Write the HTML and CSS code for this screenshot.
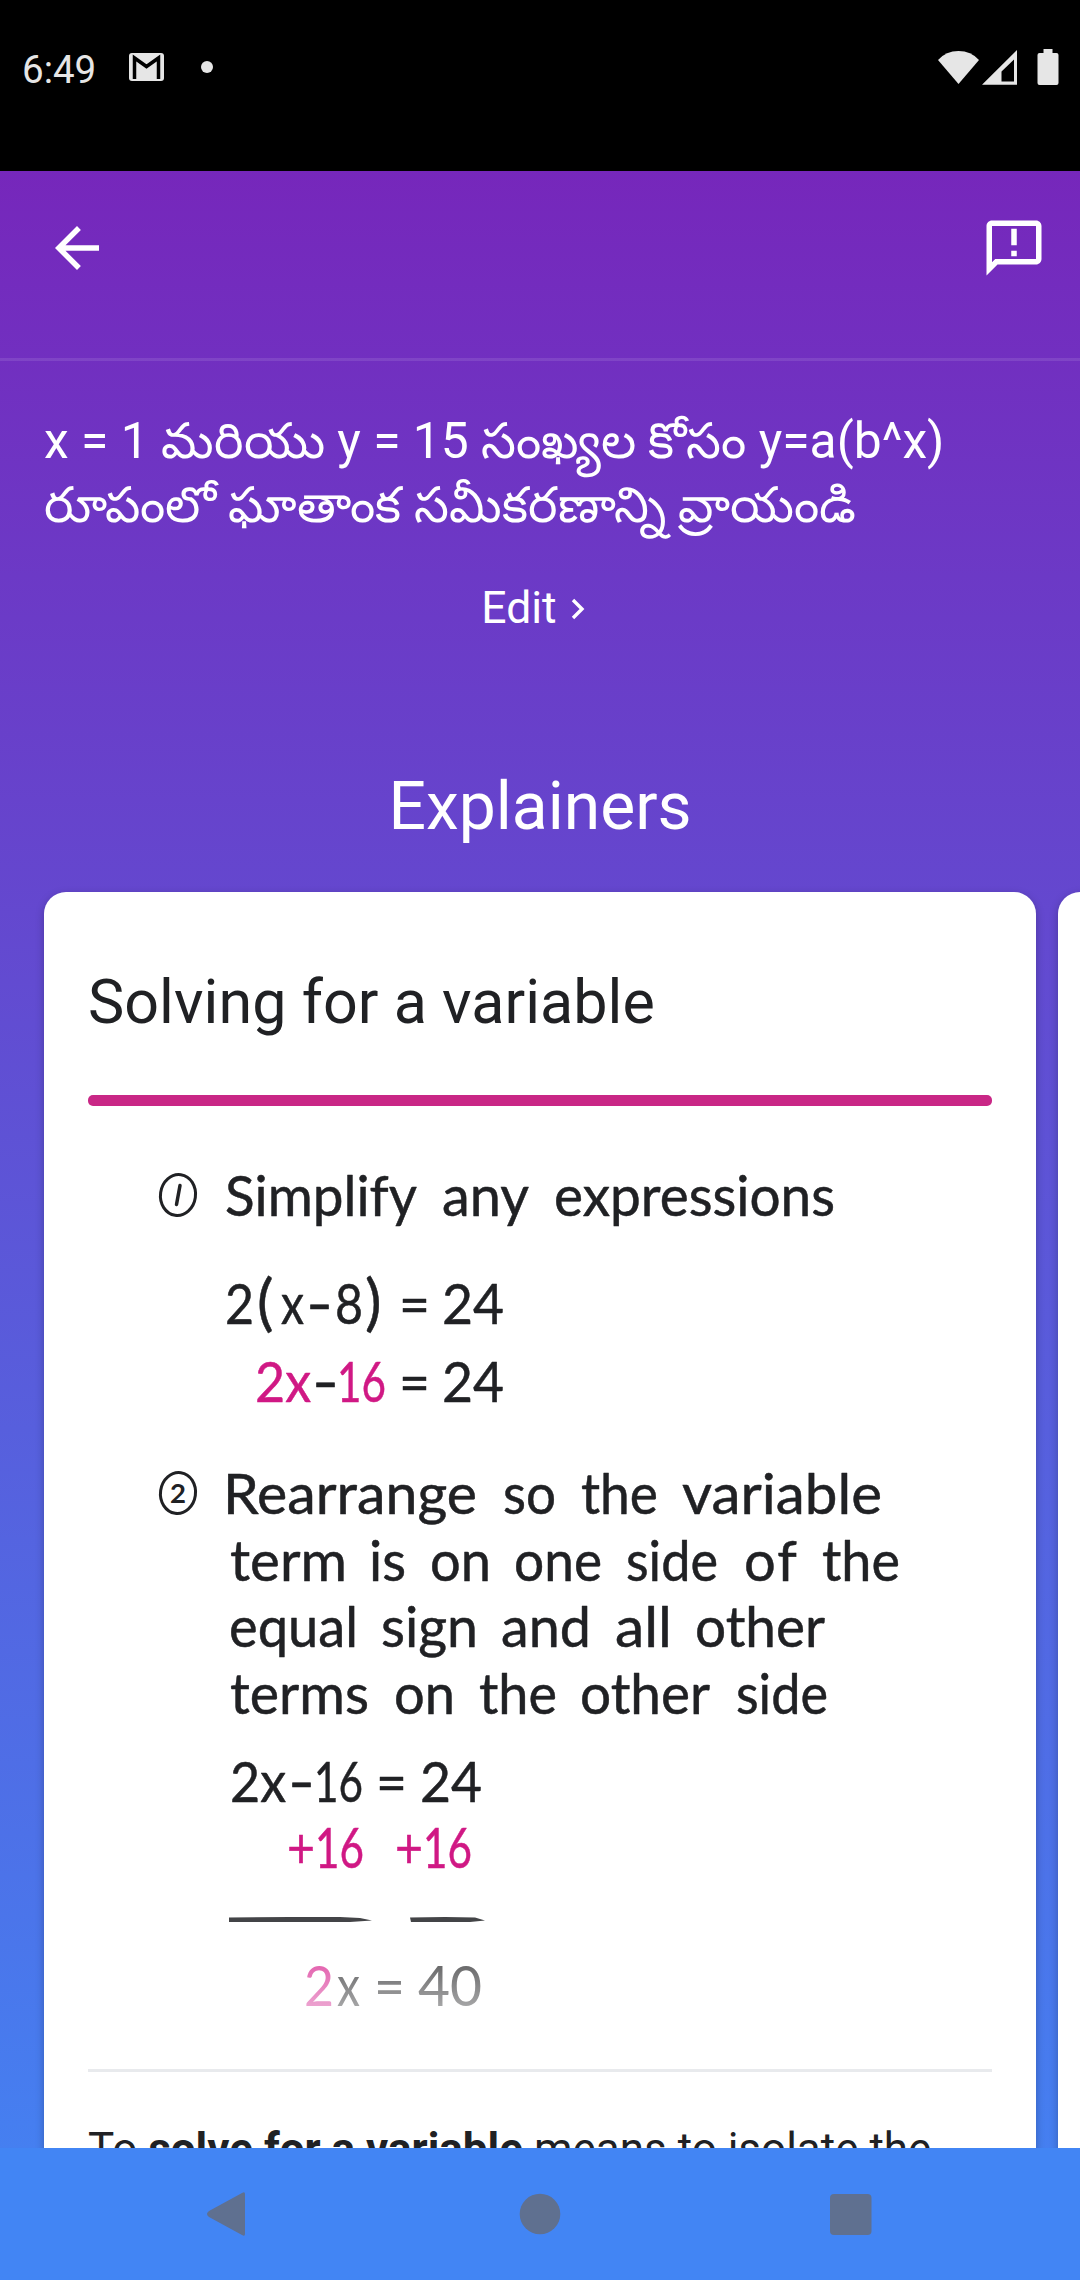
FILE: index.html
```html
<!DOCTYPE html>
<html lang="te">
<head>
<meta charset="utf-8">
<title>Explainers</title>
<link rel="stylesheet" href="styles.css">
</head>
<body>
<div class="screen">
  <header class="status">
    <span class="clock">6:49</span>
    <svg class="mail" viewBox="0 0 35 28"><rect width="35" height="28" rx="3" fill="#e6e6e6"/><path d="M5.500 26V5L17.500 13.500L29.500 5V26" fill="none" stroke="#000" stroke-width="3.500"/></svg>
    <span class="dot"></span>
    <svg class="signals" viewBox="0 0 122 38" fill="#e6e6e6">
      <path d="M0 12Q8 3 20.500 3T41 12L20.500 36Z"/>
      <path fill-rule="evenodd" d="M44 36.700L79 2V36.700ZM63.500 33.500H76V11.500L63.500 23.500Z"/>
      <path d="M105.500 1H114.500V5H118.500Q120.500 5 120.500 7V35Q120.500 37 118.500 37H101.500Q99.500 37 99.500 35V7Q99.500 5 101.500 5H105.500Z"/>
    </svg>
  </header>
  <main class="page">
    <nav class="toolbar">
      <svg class="icon" viewBox="0 0 24 24" fill="#fff"><path d="M20 11H7.830l5.590-5.590L12 4l-8 8 8 8 1.410-1.410L7.830 13H20v-2z"/></svg>
      <svg class="icon" viewBox="0 0 24 24" fill="#fff"><path d="M20 2H4c-1.100 0-2 .9-2 2v18l4-4h14c1.100 0 2-.9 2-2V4c0-1.100-.9-2-2-2zm0 14H5.170L4 17.170V4h16v12zM11 5h2v6h-2zm0 8h2v2h-2z"/></svg>
    </nav>
    <section class="query">
      <p class="question">x = 1 మరియు y = 15 సంఖ్యల కోసం y=a(b^x)<br>రూపంలో ఘాతాంక సమీకరణాన్ని వ్రాయండి</p>
      <a class="edit">Edit <svg class="chevron" viewBox="0 0 14 22"><path d="M2 2L11 11L2 20" fill="none" stroke="#fff" stroke-width="3.400"/></svg></a>
    </section>
    <h1 class="heading">Explainers</h1>
    <div class="cards">
      <article class="card">
        <h2 class="title">Solving for a variable</h2>
        <div class="accent"></div>
        <svg class="notes" viewBox="88 1106 904 963">
          <defs>
            <linearGradient id="fadeInk" gradientUnits="userSpaceOnUse" x1="0" y1="1966" x2="0" y2="2007"><stop offset="0" stop-color="#6b6b6c"/><stop offset="1" stop-color="#a6a6a7"/></linearGradient>
            <linearGradient id="fadePink" gradientUnits="userSpaceOnUse" x1="0" y1="1966" x2="0" y2="2007"><stop offset="0" stop-color="#e467b1"/><stop offset="1" stop-color="#eca3d0"/></linearGradient>
          </defs>
          <g class="ring"><ellipse cx="178" cy="1195" rx="17.500" ry="20.500" transform="rotate(8 178 1195)"/><ellipse cx="178" cy="1493" rx="17.500" ry="20.500" transform="rotate(8 178 1493)"/></g>
          <path class="tick" d="M180 1185.500L176.500 1204.500"/>
          <text class="mini" x="170" y="1503" textLength="16" lengthAdjust="spacingAndGlyphs">2</text>
          <g class="hand">
            <text x="225" y="1216" textLength="192" lengthAdjust="spacingAndGlyphs">Simplify</text><text x="442" y="1216" textLength="87" lengthAdjust="spacingAndGlyphs">any</text><text x="554" y="1216" textLength="281" lengthAdjust="spacingAndGlyphs">expressions</text>
            <text x="223" y="1514" textLength="254" lengthAdjust="spacingAndGlyphs">Rearrange</text><text x="503" y="1514" textLength="53" lengthAdjust="spacingAndGlyphs">so</text><text x="581" y="1514" textLength="77" lengthAdjust="spacingAndGlyphs">the</text><text x="682" y="1514" textLength="200" lengthAdjust="spacingAndGlyphs">variable</text>
            <text x="230" y="1581" textLength="117" lengthAdjust="spacingAndGlyphs">term</text><text x="369" y="1581" textLength="37" lengthAdjust="spacingAndGlyphs">is</text><text x="430" y="1581" textLength="61" lengthAdjust="spacingAndGlyphs">on</text><text x="514" y="1581" textLength="88" lengthAdjust="spacingAndGlyphs">one</text><text x="626" y="1581" textLength="92" lengthAdjust="spacingAndGlyphs">side</text><text x="744" y="1581" textLength="53" lengthAdjust="spacing">of</text><text x="822" y="1581" textLength="78" lengthAdjust="spacingAndGlyphs">the</text>
            <text x="229" y="1647" textLength="129" lengthAdjust="spacingAndGlyphs">equal</text><text x="381" y="1647" textLength="97" lengthAdjust="spacingAndGlyphs">sign</text><text x="501" y="1647" textLength="90" lengthAdjust="spacingAndGlyphs">and</text><text x="615" y="1647" textLength="57" lengthAdjust="spacingAndGlyphs">all</text><text x="695" y="1647" textLength="130" lengthAdjust="spacingAndGlyphs">other</text>
            <text x="230" y="1714" textLength="139" lengthAdjust="spacingAndGlyphs">terms</text><text x="394" y="1714" textLength="61" lengthAdjust="spacingAndGlyphs">on</text><text x="479" y="1714" textLength="78" lengthAdjust="spacingAndGlyphs">the</text><text x="580" y="1714" textLength="130" lengthAdjust="spacingAndGlyphs">other</text><text x="736" y="1714" textLength="92" lengthAdjust="spacingAndGlyphs">side</text>
            <g transform="translate(0 1324)"><text x="225" textLength="29" lengthAdjust="spacingAndGlyphs">2</text><text class="paren" x="257">(</text><text x="281" textLength="23" lengthAdjust="spacingAndGlyphs">x</text><text x="306" textLength="27" lengthAdjust="spacingAndGlyphs">-</text><text x="335" textLength="28" lengthAdjust="spacingAndGlyphs">8</text><text class="paren" x="365">)</text><text x="399" textLength="31" lengthAdjust="spacingAndGlyphs">=</text><text x="442" textLength="62" lengthAdjust="spacingAndGlyphs">24</text></g>
            <g transform="translate(0 1402)"><text class="pink" x="255" textLength="56" lengthAdjust="spacingAndGlyphs">2x</text><text x="312" textLength="27" lengthAdjust="spacingAndGlyphs">-</text><text class="pink" x="337" textLength="49" lengthAdjust="spacingAndGlyphs">16</text><text x="399" textLength="31" lengthAdjust="spacingAndGlyphs">=</text><text x="442" textLength="62" lengthAdjust="spacingAndGlyphs">24</text></g>
            <g transform="translate(0 1802)"><text x="230" textLength="56" lengthAdjust="spacingAndGlyphs">2x</text><text x="288" textLength="27" lengthAdjust="spacingAndGlyphs">-</text><text x="314" textLength="49" lengthAdjust="spacingAndGlyphs">16</text><text x="376" textLength="31" lengthAdjust="spacingAndGlyphs">=</text><text x="420" textLength="62" lengthAdjust="spacingAndGlyphs">24</text></g>
            <g class="pink" transform="translate(0 1868)"><text x="287" textLength="28" lengthAdjust="spacingAndGlyphs">+</text><text x="315" textLength="49" lengthAdjust="spacingAndGlyphs">16</text><text x="395" textLength="28" lengthAdjust="spacingAndGlyphs">+</text><text x="423" textLength="49" lengthAdjust="spacingAndGlyphs">16</text></g>
            <text class="fadepink" x="304" y="2006" textLength="30" lengthAdjust="spacingAndGlyphs">2</text>
            <g class="fade"><text x="337" y="2006" textLength="23" lengthAdjust="spacingAndGlyphs">x</text><text x="374" y="2006" textLength="31" lengthAdjust="spacingAndGlyphs">=</text><text x="418" y="2006" textLength="64" lengthAdjust="spacingAndGlyphs">40</text></g>
          </g>
          <g fill="#434447"><path d="M229 1917.500L290 1917L340 1917L360 1918L372 1920.500L350 1922L280 1922L229 1922Z"/><path d="M410 1917.500L445 1917L475 1917.500L485 1920.500L470 1922L411 1922Z"/></g>
        </svg>
        <div class="rule"></div>
        <p class="body">To <b>solve for a variable</b> means to isolate the</p>
      </article>
      <article class="card next"></article>
    </div>
  </main>
  <footer class="navbar">
    <svg viewBox="0 0 1080 132" fill="#5f7090"><path d="M242 45Q245 43 245 46V86Q245 89 242 87L209 69Q205 66 209 63Z"/><circle cx="540" cy="66" r="20.300"/><rect x="830" y="46" width="41.500" height="41" rx="4"/></svg>
  </footer>
</div>
</body>
</html>
```
FILE: styles.css
```css
body { margin: 0; font-family: Roboto, "Noto Sans", sans-serif; }
.screen { display: flex; flex-direction: column; width: 1080px; height: 2280px; overflow: hidden; background: #000; }
.status { display: flex; align-items: flex-start; box-sizing: border-box; height: 171px; padding: 48px 20px 0 22px; }
.clock { width: 107px; color: #e6e6e6; font-size: 38.5px; line-height: 44px; }
.mail { width: 35px; height: 28px; margin-top: 5px; }
.dot { width: 12px; height: 12px; margin: 13px 0 0 37px; border-radius: 50%; background: #e6e6e6; }
.signals { width: 122px; height: 38px; margin-left: auto; }
.page { display: flex; flex-direction: column; flex: none; height: 1977px; overflow: hidden; background: linear-gradient(#7627bb 0, #4285f4 2109px); color: #fff; }
.toolbar { display: flex; justify-content: space-between; box-sizing: border-box; flex: none; height: 190px; padding: 44px 33px 0 44px; border-bottom: 3px solid rgba(255, 255, 255, .1); }
.icon { width: 66px; height: 66px; }
.query { display: flex; flex-direction: column; align-items: center; flex: none; height: 404px; padding: 0 44px; }
.question { align-self: stretch; height: 128px; margin: 48px 0 0; font-size: 49.75px; line-height: 64px; white-space: nowrap; }
.edit { display: flex; align-items: center; gap: 14px; margin: 45px 0 0 -14px; font-size: 44.5px; line-height: 52px; }
.chevron { width: 14px; height: 22px; margin-top: 2px; }
.heading { height: 76px; margin: 4px 0 47px; font-size: 66px; font-weight: 400; line-height: 76px; text-align: center; }
.cards { display: flex; flex: none; gap: 22px; padding-left: 44px; }
.card { display: flex; flex-direction: column; box-sizing: border-box; flex: none; width: 992px; height: 1600px; padding: 72px 44px 0; border-radius: 22px; background: #fff; color: #202124; box-shadow: 0 3px 8px rgba(0, 0, 0, .25); }
.title { height: 131px; margin: 0; font-size: 61px; font-weight: 400; line-height: 76px; letter-spacing: .05px; }
.accent { height: 11px; border-radius: 5px; background: #c92786; }
.notes { flex: none; width: 904px; height: 963px; }
.hand { font-family: Lato, sans-serif; font-size: 56px; fill: #202124; stroke: #202124; stroke-width: .5; stroke-linejoin: round; }
.hand .paren { font-size: 62px; }
.hand .pink { fill: #d01884; stroke: #d01884; }
.hand .fade { fill: url(#fadeInk); stroke: none; }
.hand .fadepink { fill: url(#fadePink); stroke: none; }
.ring { fill: none; stroke: #202124; stroke-width: 3; }
.tick { fill: none; stroke: #202124; stroke-width: 3.5; stroke-linecap: round; }
.mini { font: 700 27px Lato, sans-serif; fill: #202124; }
.rule { flex: none; height: 3px; background: #e8eaed; }
.body { margin: 44px 0 0; font-size: 44px; line-height: 66px; white-space: nowrap; }
.navbar { flex: none; height: 132px; background: #4285f4; }
.navbar svg { display: block; width: 1080px; height: 132px; }
```
